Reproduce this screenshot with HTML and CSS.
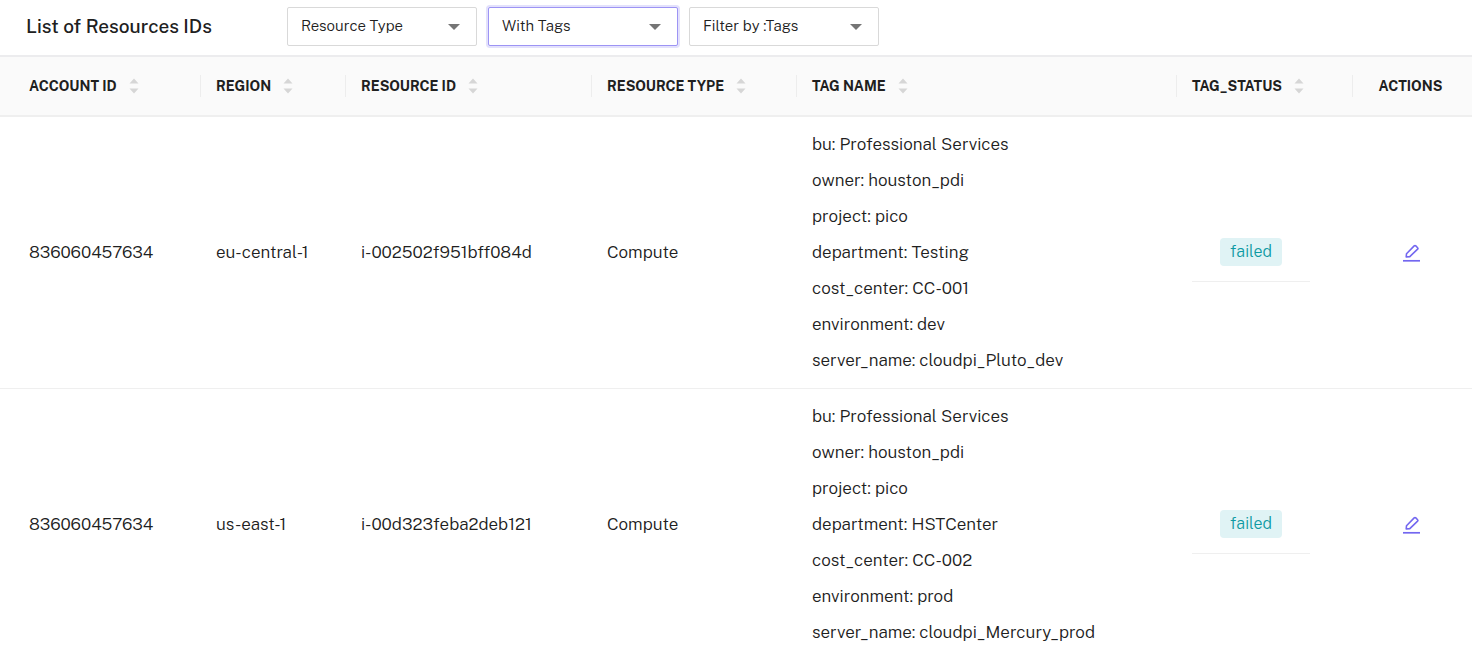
FILE: index.html
```html
<!DOCTYPE html>
<html lang="en">
<head>
<meta charset="utf-8">
<meta name="viewport" content="width=device-width, initial-scale=1">
<title>List of Resources IDs</title>
<link rel="stylesheet" href="styles.css">
</head>
<body>
<svg class="sprite" aria-hidden="true">
  <symbol id="sort" viewBox="0 0 10 16"><path d="M5 0.5L9.5 5.4H0.5zM5 15.5L0.5 10.6H9.5z" fill="#d6d6d6"/></symbol>
  <symbol id="edit" viewBox="0 0 20 20"><path d="M2 17.8H19" stroke="#7367f0" stroke-width="1.7" fill="none"/><path d="M5.2 14L5.5 10.8L13.2 2.9Q14 2.1 14.8 2.9L16.6 4.7Q17.3 5.4 16.6 6.1L8.8 13.6Z" stroke="#7367f0" stroke-width="1.6" stroke-linejoin="round" fill="none"/></symbol>
</svg>
<main class="page">
  <header class="toolbar">
    <h1 class="title">List of Resources IDs</h1>
    <form class="filters">
      <div class="select-box"><select class="select" aria-label="Resource Type"><option>Resource Type</option></select></div>
      <div class="select-box"><select class="select select-active" aria-label="With Tags"><option>With Tags</option></select></div>
      <div class="select-box"><select class="select" aria-label="Filter by Tags"><option>Filter by :Tags</option></select></div>
    </form>
  </header>
  <table class="table">
    <colgroup><col class="c-account"><col class="c-region"><col class="c-id"><col class="c-type"><col class="c-tags"><col class="c-status"><col class="c-actions"></colgroup>
    <thead>
      <tr>
        <th><button class="sort">ACCOUNT ID<svg class="sort-icon"><use href="#sort"/></svg></button></th>
        <th><button class="sort">REGION<svg class="sort-icon"><use href="#sort"/></svg></button></th>
        <th><button class="sort">RESOURCE ID<svg class="sort-icon"><use href="#sort"/></svg></button></th>
        <th><button class="sort">RESOURCE TYPE<svg class="sort-icon"><use href="#sort"/></svg></button></th>
        <th><button class="sort">TAG NAME<svg class="sort-icon"><use href="#sort"/></svg></button></th>
        <th><button class="sort">TAG_STATUS<svg class="sort-icon"><use href="#sort"/></svg></button></th>
        <th class="center">ACTIONS</th>
      </tr>
    </thead>
    <tbody>
      <tr>
        <td>836060457634</td>
        <td>eu-central-1</td>
        <td>i-002502f951bff084d</td>
        <td>Compute</td>
        <td>
          <ul class="tags">
            <li>bu: Professional Services</li>
            <li>owner: houston_pdi</li>
            <li>project: pico</li>
            <li>department: Testing</li>
            <li>cost_center: CC-001</li>
            <li>environment: dev</li>
            <li>server_name: cloudpi_Pluto_dev</li>
          </ul>
        </td>
        <td><div class="status"><span class="badge">failed</span></div></td>
        <td class="center"><button class="edit" aria-label="Edit"><svg class="edit-icon"><use href="#edit"/></svg></button></td>
      </tr>
      <tr>
        <td>836060457634</td>
        <td>us-east-1</td>
        <td>i-00d323feba2deb121</td>
        <td>Compute</td>
        <td>
          <ul class="tags">
            <li>bu: Professional Services</li>
            <li>owner: houston_pdi</li>
            <li>project: pico</li>
            <li>department: HSTCenter</li>
            <li>cost_center: CC-002</li>
            <li>environment: prod</li>
            <li>server_name: cloudpi_Mercury_prod</li>
          </ul>
        </td>
        <td><div class="status"><span class="badge">failed</span></div></td>
        <td class="center"><button class="edit" aria-label="Edit"><svg class="edit-icon"><use href="#edit"/></svg></button></td>
      </tr>
    </tbody>
  </table>
</main>
</body>
</html>
```
FILE: styles.css
```css
* { box-sizing: border-box; }
body {
  margin: 0;
  background: #fff;
  color: #202020;
  font-family: "Public Sans", Inter, "Liberation Sans", sans-serif;
  font-size: 17px;
  font-weight: 300;
}
.sprite { display: none; }
.page { height: 100vh; overflow: hidden; }
.toolbar {
  display: flex;
  align-items: center;
  gap: 75px;
  padding: 7px 26px 9px;
}
.title { margin: 0; padding-bottom: 2px; font-size: 19px; font-weight: 500; line-height: 24px; white-space: nowrap; }
.filters { display: flex; gap: 11px; }
.select-box { position: relative; }
.select-box::after {
  content: "";
  position: absolute;
  top: 17px;
  right: 17px;
  border: 6px solid transparent;
  border-top-color: #757575;
  border-bottom: 0;
  pointer-events: none;
}
.select {
  display: block;
  appearance: none;
  width: 190px;
  height: 39px;
  padding: 0 32px 2px 13px;
  border: 1px solid #d9d9d9;
  border-radius: 2px;
  background: #fff;
  color: #202020;
  font-family: inherit;
  font-size: 15px;
  font-weight: 300;
}
.select-active { border-color: #9d94f4; box-shadow: 0 0 0 2px #e3e1fc; }
.table { width: 100%; table-layout: fixed; border-collapse: separate; border-spacing: 0; }
.c-account { width: 201px; }
.c-region { width: 145px; }
.c-id { width: 246px; }
.c-type { width: 205px; }
.c-tags { width: 380px; }
.c-status { width: 176px; }
.c-actions { width: 119px; }
th {
  height: 62px;
  padding: 0 15px;
  border-top: 2px solid #ececee;
  border-bottom: 2px solid #efefef;
  background: linear-gradient(#ededed, #ededed) right center / 1px 22px no-repeat #fafafa;
  font-size: 14px;
  font-weight: 700;
  text-align: left;
}
th:last-child { background: #fafafa; }
th:first-child, td:first-child { padding-left: 29px; }
.sort {
  display: flex;
  align-items: center;
  gap: 12px;
  padding: 0;
  border: 0;
  background: none;
  color: inherit;
  font: inherit;
  white-space: nowrap;
}
.sort-icon { width: 10px; height: 16px; }
td { padding: 9px 15px 10px; border-bottom: 1px solid #efefef; }
th.center, td.center { padding-right: 4px; padding-left: 0; text-align: center; }
.tags { margin: 0; padding: 0; list-style: none; line-height: 36px; }
.status {
  display: flex;
  justify-content: center;
  width: 118px;
  padding: 15px 0;
  border-bottom: 1px solid #efefef;
}
.badge {
  padding: 0 10px;
  border-radius: 4px;
  background: #e0f3f5;
  color: #0e9aa3;
  font-size: 16px;
  line-height: 28px;
}
.edit { padding: 0; border: 0; background: none; vertical-align: middle; }
.edit-icon { display: block; width: 20px; height: 20px; }
```
